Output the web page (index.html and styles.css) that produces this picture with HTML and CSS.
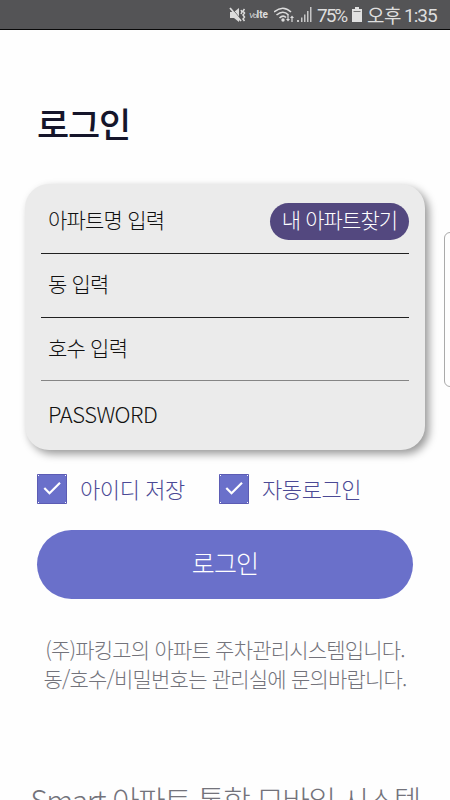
FILE: index.html
```html
<!DOCTYPE html>
<html lang="ko">
<head>
  <meta charset="UTF-8" />
  <meta name="viewport" content="width=device-width, initial-scale=1.0"/>
  <title>로그인</title>
  <link rel="stylesheet" href="styles.css">
</head>
<body>

  <div class="status-bar">
    <svg class="icon-mute" width="18" height="16" viewBox="0 0 18 16">
      <path d="M1 5h4l5-4v14l-5-4H1z" fill="#dcdcdc"/>
      <path d="M2.500 1l10 12" stroke="#545456" stroke-width="1"/>
      <path d="M1 1l11 13" stroke="#dcdcdc" stroke-width="1.800"/>
      <path d="M12 3l1 2-1 2M15.500 2l-1.500 2 1.500 2-1.500 2 1.500 2-1.500 2 1.500 2" fill="none" stroke="#dcdcdc" stroke-width="1.500"/>
    </svg>
    <span class="volte"><i>Vo</i>lte</span>
    <svg class="icon-wifi" width="21" height="16" viewBox="0 0 21 16">
      <g fill="none" stroke="#dcdcdc" stroke-width="1.600">
        <path d="M0 5Q9 -2.500 17 5M2.500 8Q9 2.500 14.500 8M5.500 11Q9 7.500 12 10.500"/>
        <path d="M14 8v5M18 15v-5" stroke-width="1.200"/>
      </g>
      <circle cx="9" cy="13" r="1.700" fill="#dcdcdc"/>
      <path d="M12 12h4l-2 2.500zM16 11h4l-2-2.500z" fill="#dcdcdc"/>
    </svg>
    <svg class="icon-signal" width="15" height="16" viewBox="0 0 15 16">
      <path d="M0 13h2v2H0zM4 10.500h1.500V15H4zM7 7.500h1.500V15H7zM10 4h1.500v11H10zM13 0h1.500v15H13z" fill="#c6c6c6"/>
    </svg>
    <span class="battery-level">75%</span>
    <svg class="icon-battery" width="10" height="15" viewBox="0 0 10 15">
      <path d="M3 0h4v2h3v13H0V2h3z" fill="#e0e0e0"/>
      <path d="M1.500 4.500h7" stroke="#777" stroke-width="1"/>
    </svg>
    <span class="ampm">오후</span>
    <span class="clock">1:35</span>
  </div>

  <main class="login-container">
    <h1>로그인</h1>

    <form class="login-form">
      <div class="login-card">
        <div class="form-row">
          <label>아파트명 입력</label>
          <button type="button" class="find-btn">내 아파트찾기</button>
        </div>
        <div class="form-row"><label>동 입력</label></div>
        <div class="form-row row-soft"><label>호수 입력</label></div>
        <div class="form-row row-last"><label class="password">PASSWORD</label></div>
      </div>

      <div class="check-group">
        <div class="check-item">
          <svg class="check-box" width="30" height="30" viewBox="0 0 30 30">
            <path d="M.5.5h29v29H.5z" fill="#6a70ca" stroke="#5c5cb4"/>
            <path d="M1 1h1v1H1zM28 1h1v1h-1zM1 28h1v1H1zM28 28h1v1h-1z" fill="#fff"/>
            <path d="M7.300 14l5.200 5.200L23 8.700" fill="none" stroke="#fff" stroke-width="2.200"/>
          </svg>
          <span class="save-label">아이디 저장</span>
        </div>
        <div class="check-item">
          <svg class="check-box" width="30" height="30" viewBox="0 0 30 30">
            <path d="M.5.5h29v29H.5z" fill="#6a70ca" stroke="#5c5cb4"/>
            <path d="M1 1h1v1H1zM28 1h1v1h-1zM1 28h1v1H1zM28 28h1v1h-1z" fill="#fff"/>
            <path d="M7.300 14l5.200 5.200L23 8.700" fill="none" stroke="#fff" stroke-width="2.200"/>
          </svg>
          <span class="auto-label">자동로그인</span>
        </div>
      </div>

      <button type="button" class="login-btn">로그인</button>
    </form>

    <p class="notice">
      <span class="notice-line">(주)파킹고의 아파트 주차관리시스템입니다.</span>
      <span class="notice-line line-two">동/호수/비밀번호는 관리실에 문의바랍니다.</span>
    </p>
    <p class="tagline">Smart 아파트 통합 모바일 시스템</p>
  </main>

  <!-- edge panel handle -->
  <div class="edge-handle"></div>

</body>
</html>
```

FILE: styles.css
```css
* {
  box-sizing: border-box;
}

body {
  font-family: "Noto Sans CJK KR", sans-serif;
  font-weight: 300;
  background: #fefefe;
  margin: 0;
  height: 800px;
  overflow: hidden;
  position: relative;
}

.status-bar {
  display: flex;
  align-items: center;
  height: 30px;
  padding-left: 229px;
  background: #545456;
  border-bottom: 1px solid #080808;
  color: #dedede;
  white-space: nowrap;
}

.status-bar svg {
  flex: none;
}

.volte {
  width: 21px;
  margin: 2px 4px 0 2px;
  font: bold 10px/14px Roboto, sans-serif;
}

.volte i {
  font-size: 8px;
  font-weight: 400;
  letter-spacing: -0.8px;
}

.icon-signal {
  margin-left: 2px;
}

.battery-level {
  width: 30px;
  margin: 2px 5px 0 5px;
  font: 400 19px/28px Roboto, sans-serif;
  letter-spacing: -2px;
}

.ampm {
  width: 34px;
  margin-left: 5px;
  font-size: 19px;
  font-weight: 400;
  line-height: 26px;
  letter-spacing: -0.6px;
}

.clock {
  margin: 2px 0 0 3px;
  font: 400 19px/28px Roboto, sans-serif;
  letter-spacing: -1px;
}

.login-container {
  padding: 0 25px;
}

h1 {
  margin: 66px 0 0 12px;
  height: 88px;
  font-size: 35px;
  line-height: 54px;
  font-weight: 500;
  letter-spacing: -1.2px;
  color: #15152a;
}

.login-card {
  width: 400px;
  height: 266px;
  padding: 0 16px;
  background: #ebebeb;
  border-radius: 24px;
  box-shadow: 4px 4px 8px rgba(0, 0, 0, 0.4);
}

.form-row {
  display: flex;
  justify-content: space-between;
  height: 64px;
  padding-left: 7px;
  border-bottom: 1px solid #202020;
  line-height: 59px;
}

.form-row:first-child {
  height: 70px;
  line-height: 71px;
}

.form-row.row-soft {
  height: 63px;
  border-color: #858585;
}

.form-row.row-last {
  border: none;
  line-height: 65px;
}

label {
  font-size: 21px;
  letter-spacing: -0.8px;
  color: #111;
}

.password {
  font-size: 22px;
  letter-spacing: -0.5px;
}

.find-btn {
  width: 139px;
  height: 37px;
  margin-top: 19px;
  padding: 0;
  border: none;
  border-radius: 19px;
  background: #53487f;
  color: #fff;
  font: 300 21px/32px "Noto Sans CJK KR", sans-serif;
  letter-spacing: -0.9px;
  display: flex;
  justify-content: center;
}

.check-group {
  display: flex;
  margin: 24px 0 0 12px;
}

.check-item {
  display: flex;
  width: 182px;
  height: 30px;
  gap: 13px;
  color: #4b4995;
  font-size: 22px;
  line-height: 28px;
  letter-spacing: -0.4px;
  white-space: nowrap;
}

.login-btn {
  display: block;
  width: 376px;
  height: 69px;
  margin: 26px 0 0 12px;
  padding: 0 0 5px;
  border: none;
  border-radius: 35px;
  background: #6a70ca;
  color: #fff;
  font: 300 25px/60px "Noto Sans CJK KR", sans-serif;
  letter-spacing: -0.8px;
}

.notice {
  margin: 36px 0 0;
  text-align: center;
  font-size: 21px;
  line-height: 29px;
  letter-spacing: -0.8px;
  color: #73737b;
  white-space: nowrap;
}

.notice-line {
  display: block;
}

.tagline {
  margin: 84px -25px 0;
  text-align: center;
  font-size: 30px;
  line-height: 44px;
  letter-spacing: -1.5px;
  color: #73737b;
  white-space: nowrap;
}

.edge-handle {
  position: absolute;
  left: 444px;
  top: 232px;
  width: 12px;
  height: 155px;
  border: 1px solid #aaa;
  border-radius: 6px;
}
```
